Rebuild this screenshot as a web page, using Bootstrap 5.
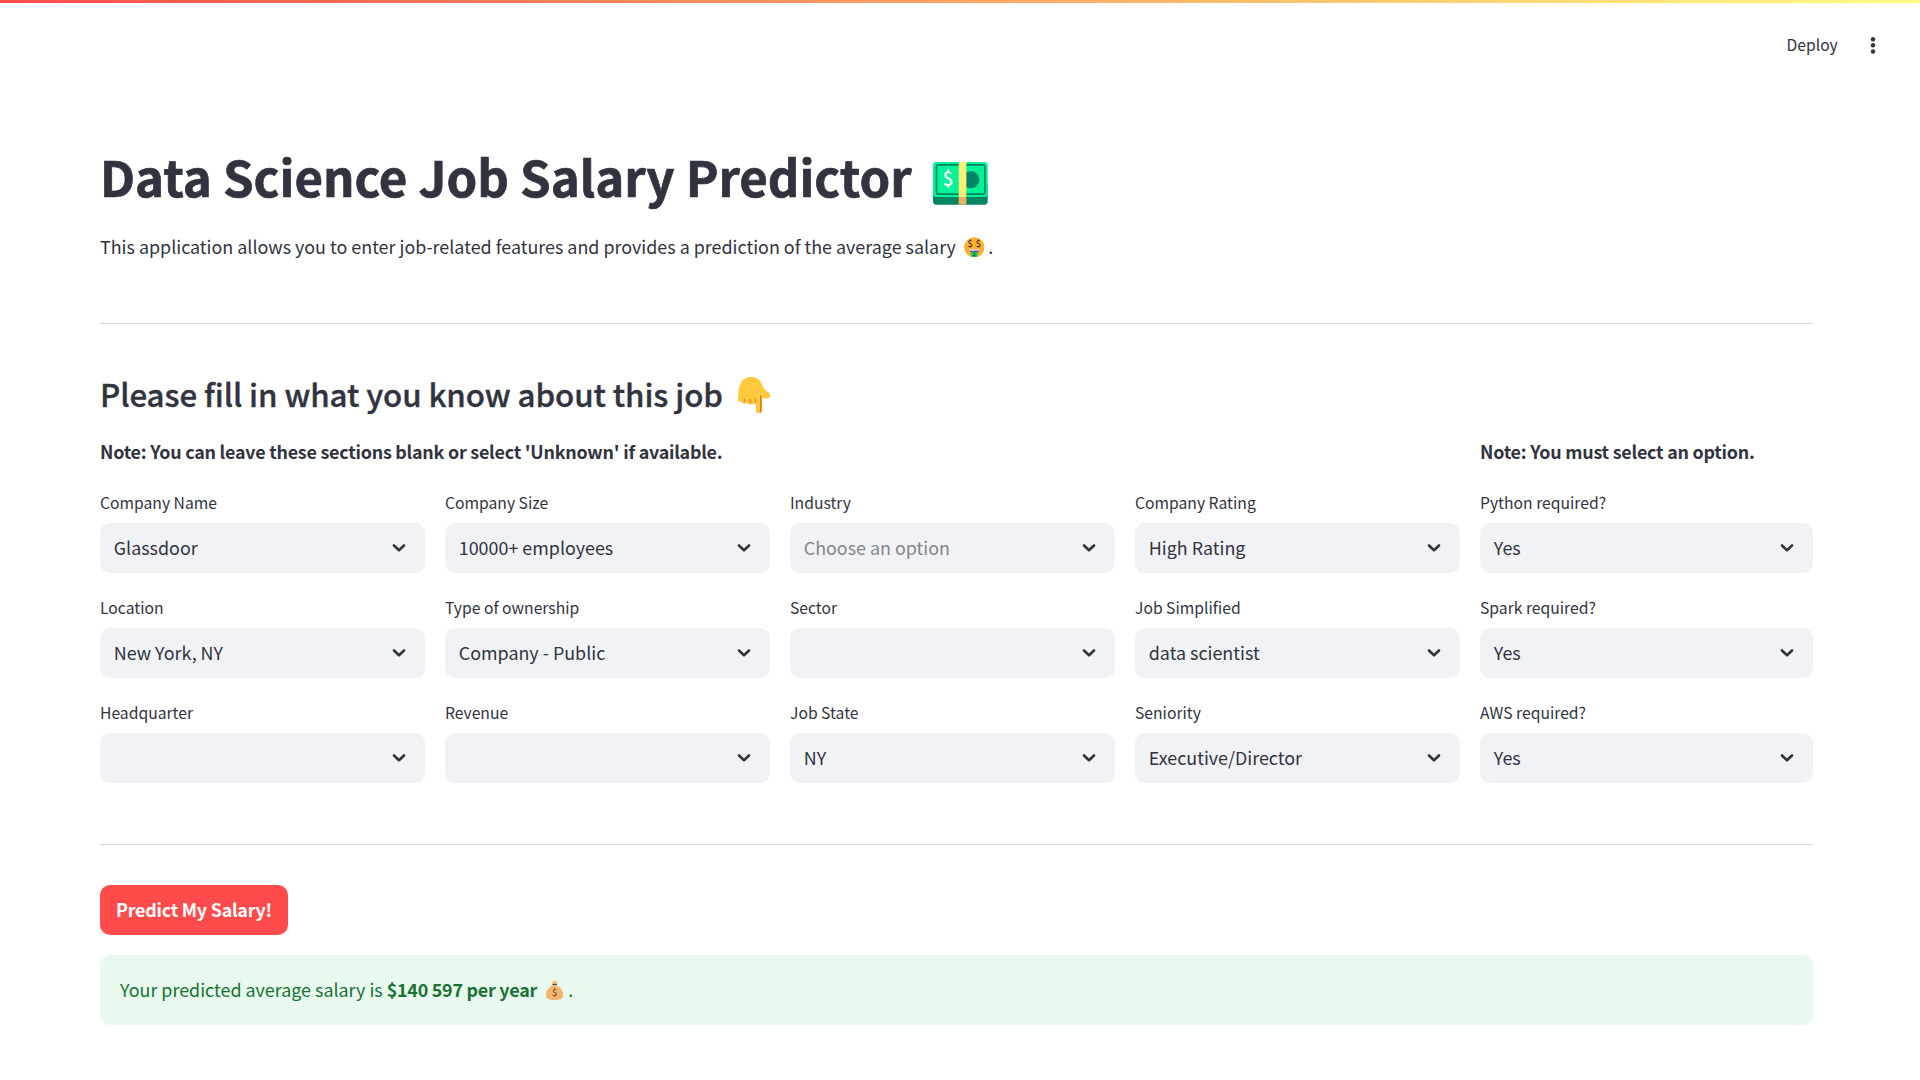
<!DOCTYPE html>
<html lang="en">
<head>
<meta charset="utf-8">
<meta name="viewport" content="width=device-width, initial-scale=1">
<title>Data Science Job Salary Predictor</title>
<link href="https://cdn.jsdelivr.net/npm/bootstrap@5.3.0/dist/css/bootstrap.min.css" rel="stylesheet">
<style>
body{font-family:"Noto Sans CJK SC",sans-serif;font-size:17.9px;line-height:32px;color:#31333f;height:1080px;overflow:hidden}
.top-bar{height:3px;background:linear-gradient(90deg,#ff4b4b,#fffd80)}
.top-tools{height:84px;padding-right:42.2px;gap:30px;font-size:15.7px}
.page-body{margin:0 107px 0 100px}
h1{font-size:49.2px;line-height:66px;font-weight:700;letter-spacing:-.03px;-webkit-text-stroke:.7px #31333f;padding-top:56px}
h2{font-size:31.3px;line-height:54px;font-weight:500;letter-spacing:-.09px;-webkit-text-stroke:.35px #31333f;margin-top:43px}
.intro{margin-top:21px}
.rule{margin:0;border-top:1px solid #d3d4d7;opacity:1}
.rule-first{margin-top:61px}
.rule-last{margin:42px 0 40px}
.form-area{gap:20px;margin-top:14px}
.left-set{flex:0 0 1360px}
.form-row{gap:20px;margin-bottom:19px}
.field{flex:1 1 0;min-width:0}
.field-label{font-size:15.7px;line-height:30px;height:36px;padding-top:1px}
.pick{height:50px;border-radius:10px;background:#f0f2f6;padding:0 16px 0 13.75px}
.pick span{padding-bottom:2px}
.pick svg{width:20px;height:20px;fill:none;stroke:#31333f;stroke-width:2.6;stroke-linecap:round;stroke-linejoin:round}
.hint{color:#83858d}
.note-line{font-weight:700;letter-spacing:-.235px;margin-bottom:20px}
.btn-predict,.btn-predict:hover{background:#ff4b4b;color:#fff}
.btn-predict{height:50px;width:188px;padding:0 0 2px;border:0;border-radius:10px;font-weight:700;font-size:17.9px;line-height:32px;letter-spacing:-.24px}
.result{background:#e8f9ee;color:#177233;height:70px;border:0;border-radius:10px;padding:0 20px 2px;margin:20px 0 0}
.result strong{font-weight:700;letter-spacing:-.24px}
.emo-cash{width:54.7px;height:42.7px;margin-left:21.7px;vertical-align:-7.7px;-webkit-text-stroke:0}
.emo-face{width:20.6px;height:20.6px;margin:0 4px 0 7.8px;vertical-align:-3.3px}
.emo-hand{width:32.5px;height:36.4px;margin-left:15px;vertical-align:-6px}
.emo-bag{width:17.3px;height:20px;margin:0 5px 0 9px;vertical-align:-3px}
</style>
</head>
<body class="bg-white">
<svg class="d-none"><symbol id="chev" viewBox="0 0 20 20"><path d="M5 7.5 10 12.2 15 7.5"/></symbol></svg>
<div class="top-bar"></div>
<header class="top-tools d-flex align-items-center justify-content-end">
  <span>Deploy</span>
  <svg width="10" height="20" viewBox="0 0 10 20" fill="#31333f"><circle cx="5" cy="4.2" r="2.2"/><circle cx="5" cy="10.3" r="2.2"/><circle cx="5" cy="16.5" r="2.2"/></svg>
</header>
<main class="page-body">
  <h1 class="mb-0">Data Science Job Salary Predictor<svg class="emo-cash" viewBox="0 0 164 128"><rect y="60" width="164" height="68" rx="10" fill="#008463"/><rect width="164" height="105" rx="9" fill="#00f397"/><rect x="10.500" y="8.500" width="145" height="88" rx="6" fill="none" stroke="#008463" stroke-width="5"/><circle cx="113" cy="53" r="26" fill="#008463"/><rect x="77" width="23" height="105" fill="#fff176"/><rect x="77" y="105" width="23" height="23" fill="#f3ad61"/><text x="45" y="73" text-anchor="middle" font-size="58" font-weight="500" fill="#fff">$</text></svg></h1>
  <p class="intro mb-0">This application allows you to enter job-related features and provides a prediction of the average salary<svg class="emo-face" viewBox="0 0 62 62"><circle cx="31" cy="31" r="30.500" fill="#ffb02e"/><g font-weight="500" fill="#402a32" text-anchor="middle"><text x="18.500" y="31" font-size="27">$</text><text x="43" y="31" font-size="27">$</text></g><path d="M14 37h34q0 9-10 9H24q-10 0-10-9z" fill="#bb1d80"/><path d="M15 37h32v4H15z" fill="#fff"/><path d="M21 44h20v8a10 10 0 0 1-20 0z" fill="#00c968"/><text x="31" y="58" font-size="15" font-weight="700" text-anchor="middle" fill="#00593c">$</text></svg>.</p>
  <hr class="rule rule-first">
  <h2 class="mb-0">Please fill in what you know about this job<svg class="emo-hand" viewBox="0 0 97 109"><path d="M54 50h17v50q-1 9-9 9t-8-9z" fill="#d67d00"/><path d="M0 72Q0 38 5 26C13 5 26 0 38 0c15 0 24 5 30 16 7 14 9 20 16 25 9 6 13 9 13 14 0 6-6 10-14 10-5 0-10-3-14-8l-3-3v46q0 9-6 9-6-1-6-9V77q-2 6-8 5-5 0-7-5-3 5-8 4-5 0-8-6-3 4-8 4-5 0-8-6-4 3-7-1z" fill="#ffc83d"/><path d="M17 63v11q2 6 5 5V66zM34 65v11q2 7 6 6V68zM50 62v16l4-3V62z" fill="#e8991a"/></svg></h2>
  <div class="form-area d-flex">
    <section class="left-set">
      <p class="note-line">Note: You can leave these sections blank or select 'Unknown' if available.</p>
      <div class="form-row d-flex">
        <div class="field"><div class="field-label">Company Name</div><div class="pick d-flex align-items-center justify-content-between"><span>Glassdoor</span><svg><use href="#chev"/></svg></div></div>
        <div class="field"><div class="field-label">Company Size</div><div class="pick d-flex align-items-center justify-content-between"><span>10000+ employees</span><svg><use href="#chev"/></svg></div></div>
        <div class="field"><div class="field-label">Industry</div><div class="pick d-flex align-items-center justify-content-between"><span class="hint">Choose an option</span><svg><use href="#chev"/></svg></div></div>
        <div class="field"><div class="field-label">Company Rating</div><div class="pick d-flex align-items-center justify-content-between"><span>High Rating</span><svg><use href="#chev"/></svg></div></div>
      </div>
      <div class="form-row d-flex">
        <div class="field"><div class="field-label">Location</div><div class="pick d-flex align-items-center justify-content-between"><span>New York, NY</span><svg><use href="#chev"/></svg></div></div>
        <div class="field"><div class="field-label">Type of ownership</div><div class="pick d-flex align-items-center justify-content-between"><span>Company - Public</span><svg><use href="#chev"/></svg></div></div>
        <div class="field"><div class="field-label">Sector</div><div class="pick d-flex align-items-center justify-content-end"><svg><use href="#chev"/></svg></div></div>
        <div class="field"><div class="field-label">Job Simplified</div><div class="pick d-flex align-items-center justify-content-between"><span>data scientist</span><svg><use href="#chev"/></svg></div></div>
      </div>
      <div class="form-row d-flex">
        <div class="field"><div class="field-label">Headquarter</div><div class="pick d-flex align-items-center justify-content-end"><svg><use href="#chev"/></svg></div></div>
        <div class="field"><div class="field-label">Revenue</div><div class="pick d-flex align-items-center justify-content-end"><svg><use href="#chev"/></svg></div></div>
        <div class="field"><div class="field-label">Job State</div><div class="pick d-flex align-items-center justify-content-between"><span>NY</span><svg><use href="#chev"/></svg></div></div>
        <div class="field"><div class="field-label">Seniority</div><div class="pick d-flex align-items-center justify-content-between"><span>Executive/Director</span><svg><use href="#chev"/></svg></div></div>
      </div>
    </section>
    <section class="flex-fill">
      <p class="note-line">Note: You must select an option.</p>
      <div class="form-row d-flex"><div class="field"><div class="field-label">Python required?</div><div class="pick d-flex align-items-center justify-content-between"><span>Yes</span><svg><use href="#chev"/></svg></div></div></div>
      <div class="form-row d-flex"><div class="field"><div class="field-label">Spark required?</div><div class="pick d-flex align-items-center justify-content-between"><span>Yes</span><svg><use href="#chev"/></svg></div></div></div>
      <div class="form-row d-flex"><div class="field"><div class="field-label">AWS required?</div><div class="pick d-flex align-items-center justify-content-between"><span>Yes</span><svg><use href="#chev"/></svg></div></div></div>
    </section>
  </div>
  <hr class="rule rule-last">
  <button type="button" class="btn btn-predict d-block">Predict My Salary!</button>
  <div class="alert result d-flex align-items-center" role="alert"><p class="mb-0">Your predicted average salary is <strong>$140 597 per year</strong><svg class="emo-bag" viewBox="0 0 52 60"><path d="M16 3l5 2 5-5 5 5 5-2-4 9H20z" fill="#f9c47c"/><path d="M17 17C9 22 0 32 0 44c0 11 6 16 26 16s26-5 26-16c0-12-9-22-17-27z" fill="#f3b671"/><rect x="19" y="11" width="14" height="5" rx="2" fill="#6d4534"/><text x="26" y="49" font-size="28" font-weight="500" text-anchor="middle" fill="#7d4533">$</text></svg>.</p></div>
</main>
<script src="https://cdn.jsdelivr.net/npm/bootstrap@5.3.0/dist/js/bootstrap.bundle.min.js"></script>
</body>
</html>
